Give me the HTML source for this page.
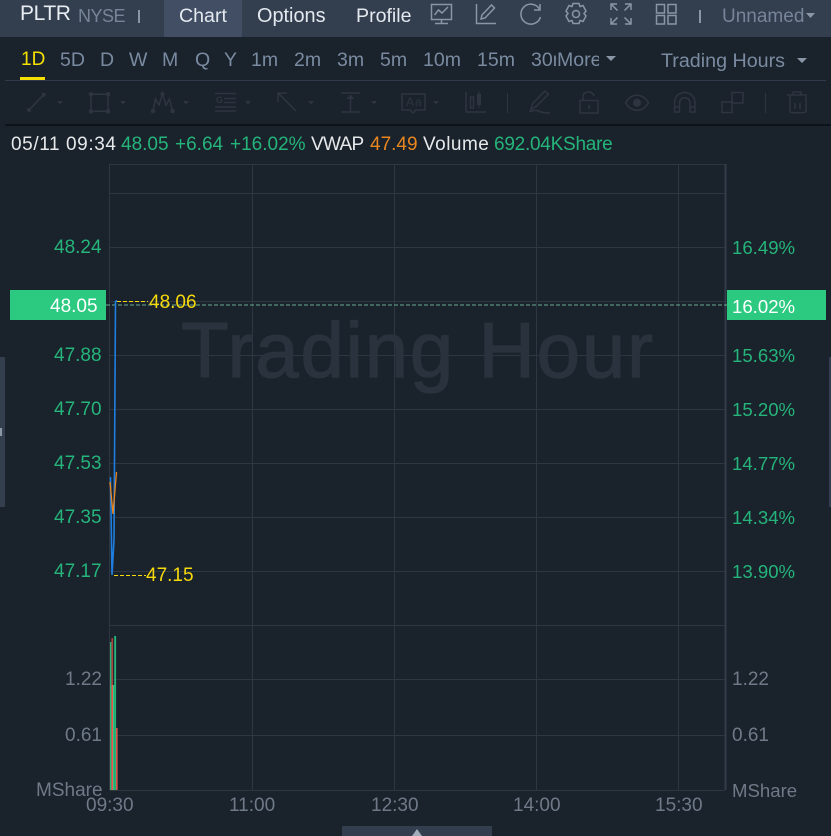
<!DOCTYPE html>
<html><head><meta charset="utf-8"><style>
html,body{margin:0;padding:0;background:#1a222c}
#p{position:relative;width:831px;height:836px;overflow:hidden;background:#1a222c;font-family:"Liberation Sans",sans-serif;font-size:19px}
#p span{position:absolute;white-space:nowrap;line-height:22px}
.g{color:#25b47a}.t{color:#7a8ba1;font-size:19.5px}.a{color:#6f7a88}.y{color:#f5d90a}.p{font-size:18.600px}
</style></head><body><div id="p">
<svg width="831" height="836" style="position:absolute;left:0;top:0">
<rect x="0" y="0" width="831" height="37" fill="#333e4f"/>
<rect x="164" y="0" width="78" height="37" fill="#414e63"/>
<rect x="5" y="80" width="821" height="1" fill="#2f3a4a"/>
<rect x="20" y="77" width="25" height="3" fill="#f5e000"/>
<rect x="5" y="124" width="826" height="2" fill="#0e131a"/>
<rect x="0" y="357" width="5" height="150" fill="#333e4f"/>
<rect x="0" y="428" width="2" height="8" fill="#8b97a6"/>
<rect x="829" y="357" width="2" height="150" fill="#333e4f"/>
<rect x="342" y="826" width="150" height="10" fill="#333e4f"/>
<path d="M412 836l5-7 5 7z" fill="#a3adba"/>
<g fill="none" stroke="#2d3641" stroke-width="1" shape-rendering="crispEdges">
<path d="M109.500 164.500H725M109.500 193.500H725M109.500 247.500H725M109.500 301.500H725M109.500 355.500H725M109.500 409.500H725M109.500 463.500H725M109.500 517.500H725M109.500 571.500H725M109.500 625.500H725M109.500 679.500H725M109.500 735.500H725M109.500 790.500H725"/>
<path d="M109.500 164V790M252.500 164V790M394.500 164V790M536.500 164V790M678.500 164V790"/>
<path d="M725.500 164V790" stroke="#333d4a" stroke-width="2"/>
</g>
<text x="181" y="377" font-family="Liberation Sans, sans-serif" font-size="78" fill="#2a323d" stroke="#2a323d" stroke-width="1.200" textLength="472">Trading Hour</text>
<rect x="10" y="290" width="96" height="30" fill="#2bca80"/>
<rect x="727" y="290" width="99" height="30" fill="#2bca80"/>
<path d="M106 305H727" stroke="#7fd0aa" stroke-width="1" stroke-dasharray="4 2" fill="none" opacity=".8"/>
<path d="M117 301.500H148M114 575.500H146" stroke="#f5d90a" stroke-width="1" stroke-dasharray="4 2" fill="none"/>
<path d="M110.500 477L112 575L114 540L115.500 301" stroke="#1f7fe0" stroke-width="1.600" fill="none"/>
<path d="M115.500 301H117" stroke="#1f7fe0" stroke-width="2" fill="none"/>
<path d="M110 482L113 514L116.500 472" stroke="#e8861f" stroke-width="1.300" fill="none"/>
<rect x="110" y="642" width="1.400" height="148" fill="#25b47a"/>
<rect x="111.400" y="638" width="1.700" height="47" fill="#a8433d"/>
<rect x="111.400" y="685" width="1.700" height="105" fill="#e8574c"/>
<rect x="113" y="685" width="1.200" height="105" fill="#2bca80"/>
<rect x="114.200" y="636" width="1.900" height="154" fill="#25b47a"/>
<rect x="116.100" y="728" width="1.500" height="62" fill="#e8574c"/>
<g fill="none" stroke="#8a96a6" stroke-width="1.500">
<path d="M431.500 4.500h20v15h-20zM441.500 19.500v4M435 23.500h13M434.500 15l4-5 3.500 3 6-6"/>
<path d="M476.500 4v19.500h19.500M481 19l1-4 9.500-10 3 3-9.500 10z"/>
<path d="M539.500 9a10 10 0 1 0 1 8M540 4v6h-6"/>
<path d="M573 3.500h6l1 3 3-1 3 5.500-2 2.500 2 2.500-3 5.500-3-1-1 3h-6l-1-3-3 1-3-5.500 2-2.500-2-2.500 3-5.500 3 1z"/>
<circle cx="576" cy="14" r="3.500"/>
<path d="M611 10V4h6M625 4h6v6M631 18v6h-6M617 24h-6v-6M611 4l6.500 6.500M631 4l-6.500 6.500M631 24l-6.500-6.500M611 24l6.500-6.500"/>
<path d="M656.500 4.500h8v8.500h-8zM668 4.500h8v8.500h-8zM656.500 15.500h8v8.500h-8zM668 15.500h8v8.500h-8z"/>
</g>
<g fill="#8a96a6">
<rect x="138" y="10" width="2" height="13"/><rect x="699" y="10" width="2" height="13"/>
<path d="M606 56h10l-5 5zM797 58h10l-5 5zM806 13h9l-4.500 5z"/>
</g>
<g fill="none" stroke="#2e3540" stroke-width="1.500">
<path d="M29 110L43.700 94.700"/>
<path d="M91 94.300h17v17H91z"/>
<path d="M153 111L155.500 99L159 105L162.500 94L166 105L169.500 99L172.500 111"/>
<path d="M215 93.500h21M224 98.500h12M224 102.500h12M215 107h21M215 111h21"/>
<path d="M278 93l18 18M278 93v9M278 93h9"/>
<path d="M341 93h19M341 112h19M350.500 95v17"/>
<path d="M402 94h23v16h-9l-3 3-3-3h-8z"/>
<path d="M466 92v20h20"/>
<path d="M470.500 97h3v11h-3z"/>
<path d="M530.500 110l2.500-7 12-12 3.500 3-12 12zM530 112c6-3 8-1 11 0s5 1 9 1"/>
<path d="M580 100.500h18v12.500h-18zM583 100.500v-4c0-6 10-6 11-.5M589 105v4"/>
<path d="M625.500 102.700c6-10 17-10 23 0-6 10-17 10-23 0z"/>
<path d="M674.500 112v-9c0-14 20.500-14 20.500 0v9h-5v-9c0-7-10.500-7-10.500 0v9zM674.500 107h5M690 107h5"/>
<path d="M732 102v10.500h-10V102zM732 103h11V92.500h-11V102"/>
<path d="M787 95h20M793 95v-3h8v3M790 96v16c0 1 15 1 16 0V96M795 103v6M800 103v6"/>
</g>
<g fill="#2e3540">
<path d="M57 101h6l-3 3.500zM120 101h6l-3 3.500zM183 101h6l-3 3.500zM245 101h6l-3 3.500zM308 101h6l-3 3.500zM371 101h6l-3 3.500zM433 101h6l-3 3.500z"/>
<circle cx="29" cy="110" r="2"/><circle cx="43.700" cy="94.700" r="2"/>
<circle cx="91" cy="94.300" r="2.300"/><circle cx="108" cy="94.300" r="2.300"/><circle cx="91" cy="111.300" r="2.300"/><circle cx="108" cy="111.300" r="2.300"/>
<circle cx="153" cy="111" r="2.300"/><circle cx="172.500" cy="111" r="2.300"/><circle cx="162.500" cy="94" r="2"/><circle cx="637" cy="102.700" r="4"/>
<rect x="477" y="94" width="4" height="11"/><rect x="478.500" y="91" width="1" height="17"/>
<path d="M350.500 95l-4 4h8z"/>
<rect x="507" y="93" width="1" height="20"/><rect x="765" y="93" width="1" height="20"/>
<text x="216" y="103" font-family="Liberation Sans, sans-serif" font-size="9" font-weight="bold">G</text>
<text x="406" y="106" font-family="Liberation Sans, sans-serif" font-size="12" letter-spacing="1">Aa</text>
</g>
</svg>

<span style="left:20px;top:3px;font-size:21px;color:#e8edf2;letter-spacing:-.4px">PLTR</span>
<span style="left:78px;top:5px;font-size:18px;color:#77859a;letter-spacing:-.5px">NYSE</span>
<span style="left:179px;top:5px;font-size:19.600px;color:#e4e9ef">Chart</span>
<span style="left:257px;top:5px;font-size:19.900px;color:#e4e9ef">Options</span>
<span style="left:356px;top:5px;font-size:19.600px;color:#e4e9ef">Profile</span>
<span style="left:722px;top:6px;color:#77859a">Unnamed</span>

<span style="left:21px;top:49px;color:#f5e000">1D</span>
<span class="t" style="left:60px;top:49px">5D</span>
<span class="t" style="left:100px;top:49px">D</span>
<span class="t" style="left:129px;top:49px">W</span>
<span class="t" style="left:162px;top:49px">M</span>
<span class="t" style="left:195px;top:49px">Q</span>
<span class="t" style="left:224px;top:49px">Y</span>
<span class="t" style="left:251px;top:49px">1m</span>
<span class="t" style="left:294px;top:49px">2m</span>
<span class="t" style="left:337px;top:49px">3m</span>
<span class="t" style="left:380px;top:49px">5m</span>
<span class="t" style="left:423px;top:49px">10m</span>
<span class="t" style="left:477px;top:49px">15m</span>
<span class="t" style="left:531px;top:49px;width:25px;overflow:hidden">30m</span>
<span class="t" style="left:557px;top:49px;width:42px;overflow:hidden">More</span>
<span class="t" style="left:661px;top:50px;font-size:19.700px">Trading Hours</span>

<span style="left:11px;top:134px;color:#e6e8ea;letter-spacing:.6px">05/11 09:34</span>
<span class="g" style="left:121px;top:134px">48.05</span>
<span class="g" style="left:175px;top:134px">+6.64</span>
<span class="g" style="left:230px;top:134px">+16.02%</span>
<span style="left:311px;top:134px;color:#e6e8ea;letter-spacing:-.7px">VWAP</span>
<span style="left:370px;top:134px;color:#e8861f">47.49</span>
<span style="left:423px;top:134px;color:#e6e8ea;letter-spacing:.5px">Volume</span>
<span class="g" style="left:494px;top:134px;letter-spacing:-.25px">692.04KShare</span>

<span class="g" style="left:54px;top:237px">48.24</span>
<span style="left:50px;top:296px;color:#fff">48.05</span>
<span class="g" style="left:54px;top:345px">47.88</span>
<span class="g" style="left:54px;top:399px">47.70</span>
<span class="g" style="left:54px;top:453px">47.53</span>
<span class="g" style="left:54px;top:507px">47.35</span>
<span class="g" style="left:54px;top:561px">47.17</span>

<span class="g p" style="left:732px;top:237px">16.49%</span>
<span class="p" style="left:732px;top:296px;color:#fff">16.02%</span>
<span class="g p" style="left:732px;top:345px">15.63%</span>
<span class="g p" style="left:732px;top:399px">15.20%</span>
<span class="g p" style="left:732px;top:453px">14.77%</span>
<span class="g p" style="left:732px;top:507px">14.34%</span>
<span class="g p" style="left:732px;top:561px">13.90%</span>

<span class="y" style="left:149px;top:292px">48.06</span>
<span class="y" style="left:146px;top:565px">47.15</span>

<span class="a" style="left:65px;top:669px">1.22</span>
<span class="a" style="left:65px;top:725px">0.61</span>
<span class="a" style="left:36px;top:780px">MShare</span>
<span class="a" style="left:732px;top:669px">1.22</span>
<span class="a" style="left:732px;top:725px">0.61</span>
<span class="a" style="left:732px;top:780px;font-size:18.600px">MShare</span>

<span class="a" style="left:86px;top:795px">09:30</span>
<span class="a" style="left:229px;top:795px">11:00</span>
<span class="a" style="left:371px;top:795px">12:30</span>
<span class="a" style="left:513px;top:795px">14:00</span>
<span class="a" style="left:655px;top:795px">15:30</span>
</div></body></html>
